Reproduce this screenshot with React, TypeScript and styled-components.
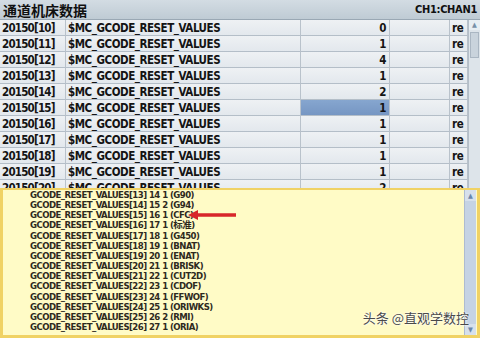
import styled, { createGlobalStyle } from "styled-components"

const GlobalStyle = createGlobalStyle`
    html, body {
        margin: 0;
        padding: 0;
        background: #ffffff;
    }
`

const Screen = styled.div`
    width: 480px;
    height: 338px;
    overflow: hidden;
    display: flex;
    flex-direction: column;
    background: #e4e9ee;
    font-family: "DejaVu Sans Condensed", "DejaVu Sans", "Noto Sans CJK SC", sans-serif;
    font-weight: bold;
    color: #141414;
`

const Header = styled.div`
    height: 20px;
    flex: none;
    display: flex;
    align-items: center;
    justify-content: space-between;
    padding: 0 3px 0 3px;
    background: linear-gradient(#d3dce3, #bfcbd4);
    border-bottom: 1px solid #9aa8b4;
    box-sizing: border-box;
`

const Title = styled.div`
    font-family: "Noto Sans CJK SC", sans-serif;
    font-size: 14px;
    font-weight: 700;
    color: #101010;
`

const Channel = styled.div`
    font-size: 11px;
    letter-spacing: -0.3px;
    color: #101010;
`

const Body = styled.div`
    height: 168px;
    flex: none;
    display: flex;
    overflow: hidden;
`

const Grid = styled.div`
    flex: 1;
    display: grid;
    grid-template-columns: 66px 235px 89px 60px 18px;
    grid-auto-rows: 16px;
    align-content: start;
`

const Cell = styled.div<{ $align?: string; $selected?: boolean; $tight?: boolean }>`
    display: flex;
    align-items: center;
    justify-content: ${({ $align }) => $align || "flex-start"};
    padding: 0 3px 0 2px;
    font-size: 11.5px;
    letter-spacing: ${({ $tight }) => ($tight ? "-0.8px" : "-0.45px")};
    white-space: nowrap;
    overflow: hidden;
    box-sizing: border-box;
    border-right: 1px solid #b9c2cb;
    border-bottom: 1px solid #b4bec8;
    background: ${({ $selected }) =>
        $selected ? "linear-gradient(#86a6cf, #7696c3)" : "linear-gradient(#eef1f4, #e3e8ed)"};
`

const TableScroll = styled.div`
    width: 12px;
    flex: none;
    display: flex;
    flex-direction: column;
    background: #dde4ea;
    border-left: 1px solid #b4bec8;
    box-sizing: border-box;
`

const ScrollArrow = styled.div`
    height: 10px;
    display: flex;
    align-items: center;
    justify-content: center;
    font-size: 7px;
    color: #7890a8;
    background: #e8eef3;
`

const ScrollThumb = styled.div`
    height: 24px;
    margin: 2px 1px;
    background: #c9d3dc;
    border: 1px solid #aab6c2;
`

const Popup = styled.div`
    position: relative;
    flex: 1;
    box-sizing: border-box;
    display: flex;
    background: #fffbc6;
    border: 3px solid #f0d264;
    border-top-width: 2px;
`

const List = styled.div`
    flex: 1;
    padding: 0 0 0 27px;
    display: flex;
    flex-direction: column;
    overflow: hidden;
`

const Line = styled.div`
    height: 10.17px;
    flex: none;
    line-height: 10px;
    font-family: "DejaVu Sans Condensed", "Noto Sans CJK SC", sans-serif;
    font-size: 9.5px;
    font-weight: bold;
    letter-spacing: -0.55px;
    color: #2e2a1e;
    white-space: nowrap;
`

const PopupScroll = styled.div`
    width: 11px;
    flex: none;
    margin-right: 1px;
    display: flex;
    flex-direction: column;
    justify-content: space-between;
    background: #c5d3e4;
    border-left: 1px solid #aebcd0;
`

const PopupArrow = styled.div`
    height: 11px;
    display: flex;
    align-items: center;
    justify-content: center;
    font-size: 7px;
    color: #6a86aa;
    background: #d6e0ec;
`

const Pointer = styled.svg`
    position: absolute;
    left: 185px;
    top: 20px;
`

const Watermark = styled.div`
    position: absolute;
    right: 8px;
    bottom: 8px;
    font-family: "Noto Sans CJK SC", sans-serif;
    font-size: 13px;
    font-weight: 400;
    color: #4a4a4a;
    text-shadow: 0 0 2px #ffffff, 0 0 2px #ffffff;
`

const rows = [
    ["10", "0"], ["11", "1"], ["12", "4"], ["13", "1"], ["14", "2"], ["15", "1"],
    ["16", "1"], ["17", "1"], ["18", "1"], ["19", "1"], ["20", "2"],
]

const lines = [
    "GCODE_RESET_VALUES[13] 14 1 (G90)",
    "GCODE_RESET_VALUES[14] 15 2 (G94)",
    "GCODE_RESET_VALUES[15] 16 1 (CFC)",
    "GCODE_RESET_VALUES[16] 17 1 (标准)",
    "GCODE_RESET_VALUES[17] 18 1 (G450)",
    "GCODE_RESET_VALUES[18] 19 1 (BNAT)",
    "GCODE_RESET_VALUES[19] 20 1 (ENAT)",
    "GCODE_RESET_VALUES[20] 21 1 (BRISK)",
    "GCODE_RESET_VALUES[21] 22 1 (CUT2D)",
    "GCODE_RESET_VALUES[22] 23 1 (CDOF)",
    "GCODE_RESET_VALUES[23] 24 1 (FFWOF)",
    "GCODE_RESET_VALUES[24] 25 1 (ORIWKS)",
    "GCODE_RESET_VALUES[25] 26 2 (RMI)",
    "GCODE_RESET_VALUES[26] 27 1 (ORIA)",
]

export default function App() {
    return (
        <>
            <GlobalStyle />
            <Screen>
                <Header>
                    <Title>通道机床数据</Title>
                    <Channel>CH1:CHAN1</Channel>
                </Header>
                <Body>
                    <Grid>
                        {rows.map(([idx, val]) => (
                            <>
                                <Cell key={`a${idx}`} $tight>20150[{idx}]</Cell>
                                <Cell key={`b${idx}`}>$MC_GCODE_RESET_VALUES</Cell>
                                <Cell key={`c${idx}`} $align="flex-end" $selected={idx === "15"}>{val}</Cell>
                                <Cell key={`d${idx}`}></Cell>
                                <Cell key={`e${idx}`}>re</Cell>
                            </>
                        ))}
                    </Grid>
                    <TableScroll>
                        <ScrollArrow>▲</ScrollArrow>
                        <ScrollThumb />
                    </TableScroll>
                </Body>
                <Popup>
                    <List>
                        {lines.map((l) => <Line key={l}>{l}</Line>)}
                    </List>
                    <PopupScroll>
                        <PopupArrow>▲</PopupArrow>
                        <PopupArrow>▼</PopupArrow>
                    </PopupScroll>
                    <Pointer width="50" height="10" viewBox="0 0 50 10">
                        <polygon points="0,5 10,0 10,3.3 48,3.3 48,6.7 10,6.7 10,10" fill="#d8262a" />
                    </Pointer>
                    <Watermark>头条 @直观学数控</Watermark>
                </Popup>
            </Screen>
        </>
    )
}
